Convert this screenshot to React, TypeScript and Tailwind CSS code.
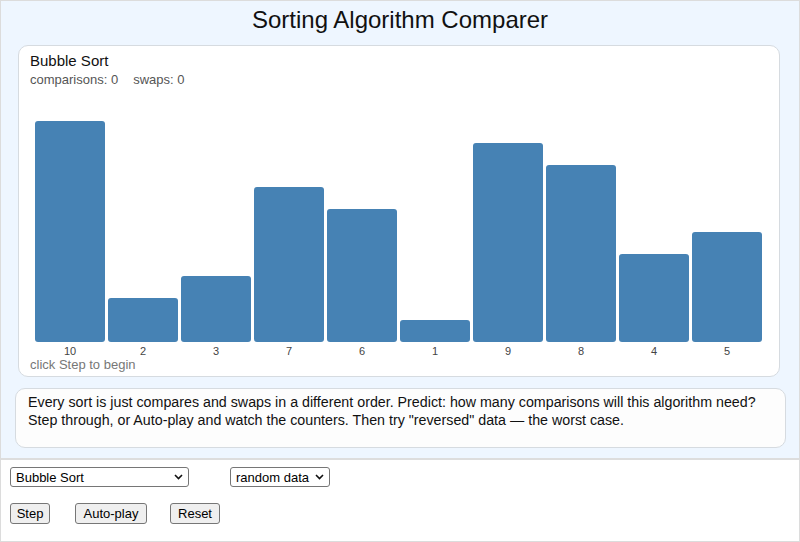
import React, { useState } from "react";

const DATA = [10, 2, 3, 7, 6, 1, 9, 8, 4, 5];

function Chevron() {
  return (
    <svg width="9" height="6" viewBox="0 0 9 6" className="shrink-0">
      <path d="M1 1l3.5 3.5L8 1" fill="none" stroke="#111" strokeWidth="1.6" />
    </svg>
  );
}

function Select({ value, width }: { value: string; width: string }) {
  return (
    <div
      className={`${width} h-[20px] flex items-center justify-between border border-[#767676] rounded-[3px] bg-white pl-[5px] pr-[5px] text-[13px] leading-none text-black`}
    >
      <span>{value}</span>
      <Chevron />
    </div>
  );
}

function Btn({ label, className }: { label: string; className: string }) {
  return (
    <button
      className={`${className} h-[21px] border border-[#767676] rounded-[3px] bg-[#efefef] text-[13px] leading-none text-black`}
    >
      {label}
    </button>
  );
}

export default function App() {
  const [values] = useState<number[]>(DATA);
  const [comparisons] = useState(0);
  const [swaps] = useState(0);

  return (
    <div className="w-[800px] h-[542px] border border-[#dcdcdc] flex flex-col font-['Liberation_Sans',Arial,sans-serif] text-[#111]">
      <div className="h-[459px] bg-[#eef6ff] border-b-2 border-[#dddddd] flex flex-col">
        <h1 className="pt-[4px] text-[24px] leading-[30px] text-center">
          Sorting Algorithm Comparer
        </h1>

        <div className="mt-[10px] ml-[17px] w-[762px] h-[332px] bg-white border border-[#d6dbe0] rounded-[10px] flex flex-col">
          <div className="pl-[11px] pt-[6px] text-[15px] leading-[18px]">Bubble Sort</div>
          <div className="pl-[11px] mt-[2px] text-[13px] leading-[16px] text-[#555] flex gap-[15px]">
            <span>comparisons: {comparisons}</span>
            <span>swaps: {swaps}</span>
          </div>

          <div className="ml-[16px] mr-[17px] h-[254px] flex items-end gap-[3px]">
            {values.map((v, i) => (
              <div
                key={i}
                className="flex-1 bg-[#4682b4] rounded-[3px]"
                style={{ height: `${v * 22.1}px` }}
              />
            ))}
          </div>
          <div className="ml-[16px] mr-[17px] mt-[3px] flex gap-[3px] text-[11px] leading-[13px] text-[#444]">
            {values.map((v, i) => (
              <span key={i} className="flex-1 text-center">
                {v}
              </span>
            ))}
          </div>
          <div className="pl-[11px] text-[13px] leading-[13px] text-[#777]">click Step to begin</div>
        </div>

        <div className="mt-[11px] ml-[14px] w-[771px] h-[60px] bg-[#fdfdfd] border border-[#d6dbe0] rounded-[10px] pl-[12px] pt-[4px] text-[14.25px] leading-[18px]">
          Every sort is just compares and swaps in a different order. Predict: how many comparisons will this
          algorithm need?
          <br />
          Step through, or Auto-play and watch the counters. Then try "reversed" data — the worst case.
        </div>
      </div>

      <div className="flex-1 bg-white px-[9px] pt-[7px] flex flex-col gap-[16px]">
        <div className="flex gap-[41px]">
          <Select value="Bubble Sort" width="w-[179px]" />
          <Select value="random data" width="w-[100px]" />
        </div>
        <div className="flex items-start">
          <Btn label="Step" className="w-[40px]" />
          <Btn label="Auto-play" className="w-[72px] ml-[25px]" />
          <Btn label="Reset" className="w-[50px] ml-[23px]" />
        </div>
      </div>
    </div>
  );
}
